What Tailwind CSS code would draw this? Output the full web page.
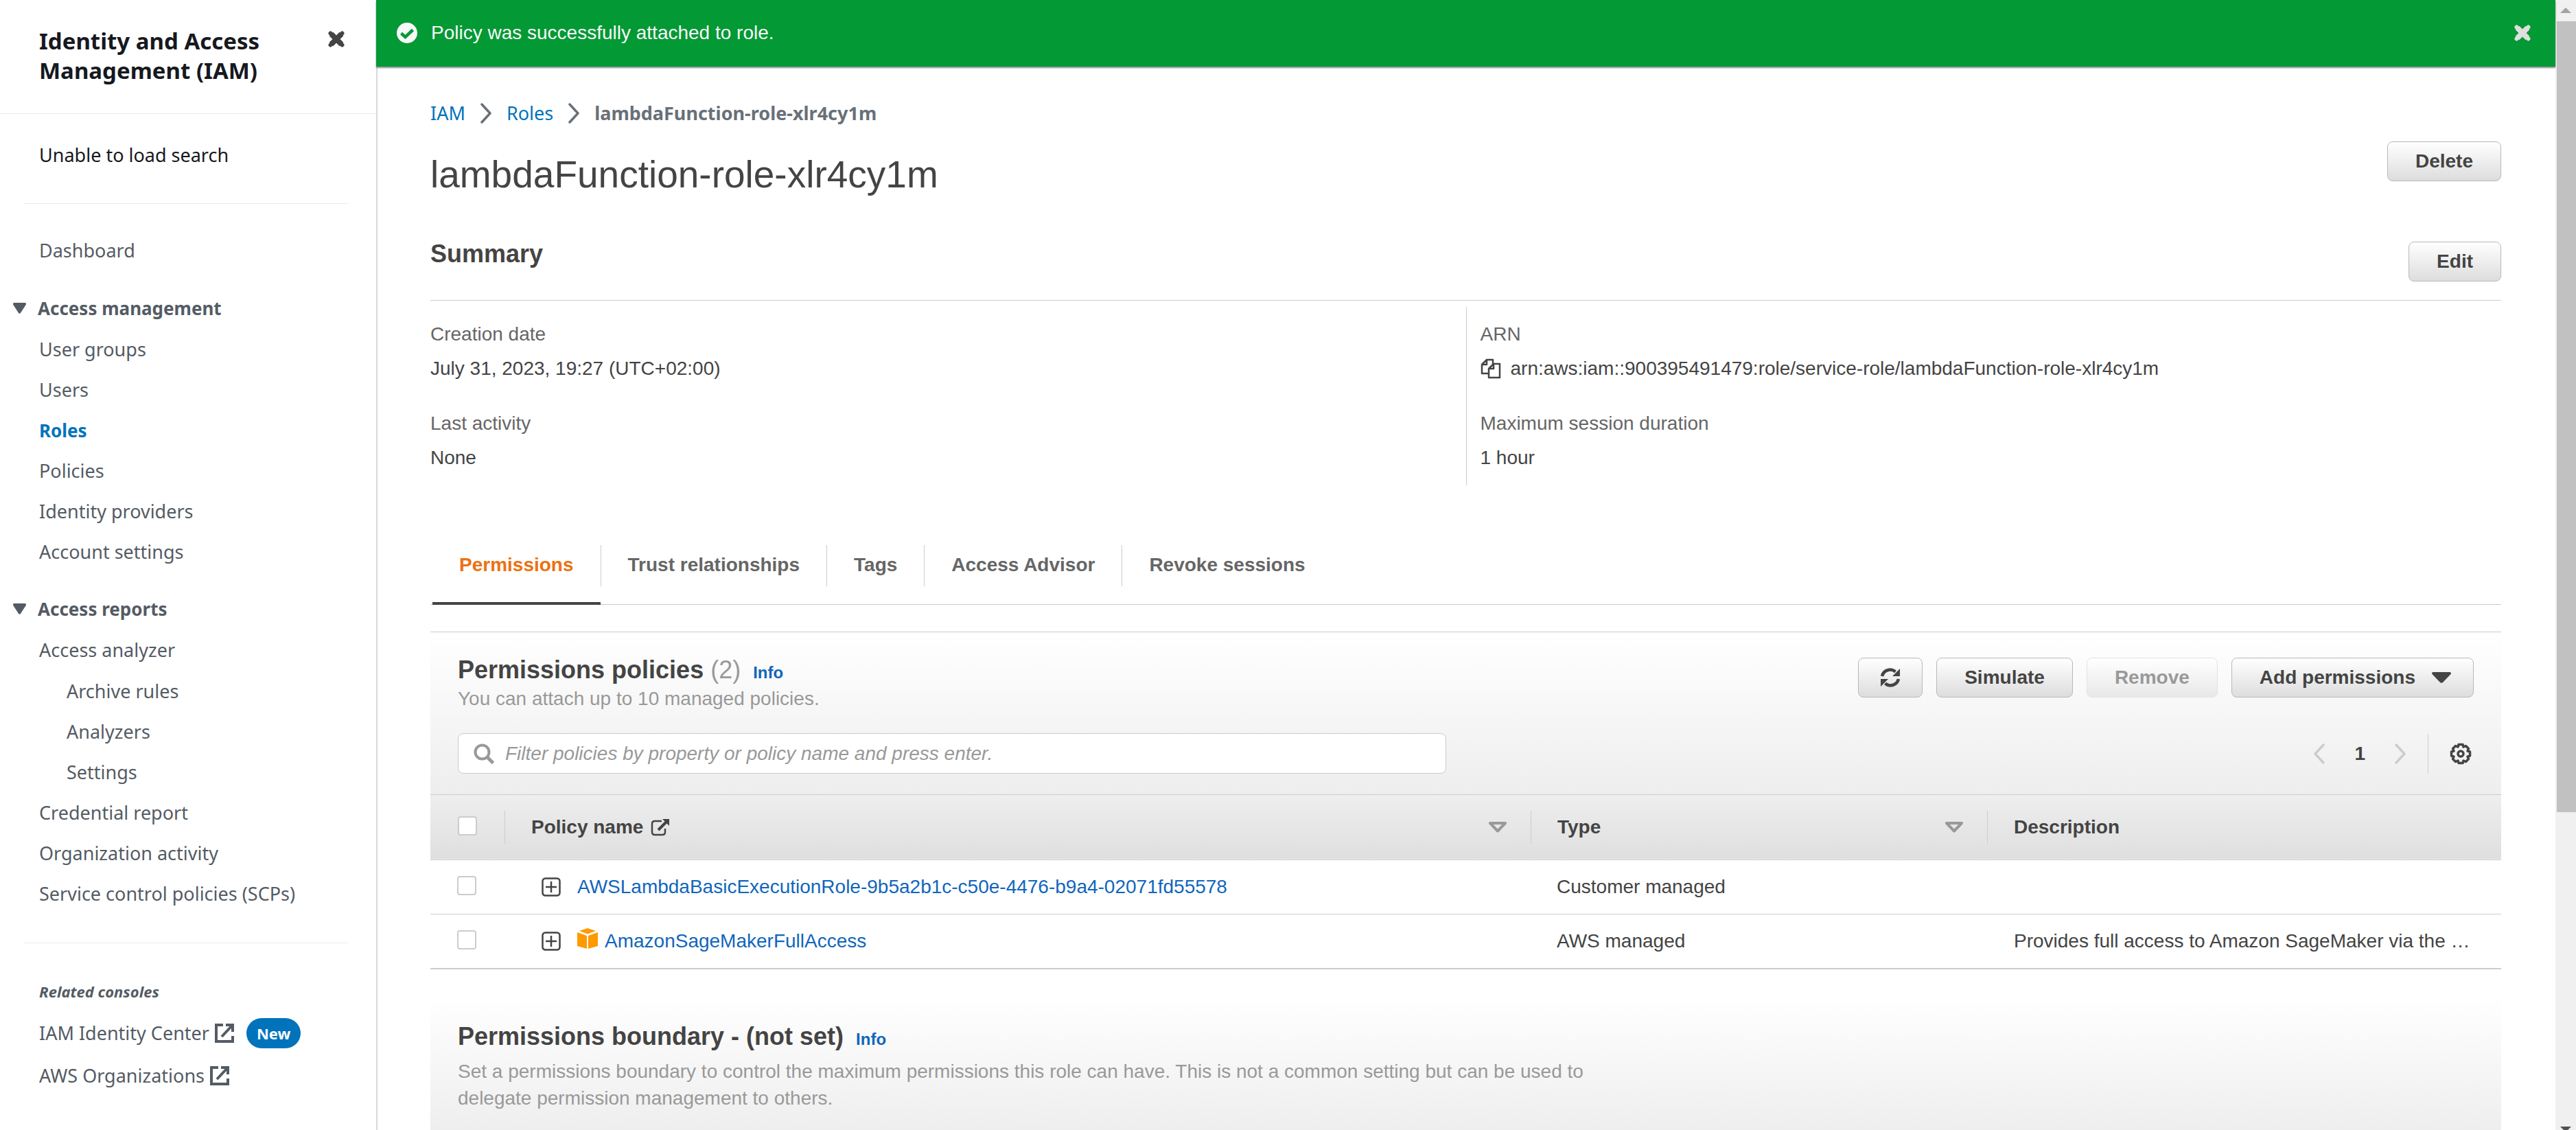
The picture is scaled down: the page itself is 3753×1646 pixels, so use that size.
<!DOCTYPE html>
<html lang="en">
<head>
<meta charset="utf-8">
<title>IAM - lambdaFunction-role-xlr4cy1m</title>
<script src="https://cdn.jsdelivr.net/npm/@tailwindcss/browser@4"></script>
</head>
<body class="flex h-screen overflow-hidden bg-white font-['Liberation_Sans',Arial,sans-serif] text-[28px] leading-[32px] text-[#444]">

<svg class="hidden" aria-hidden="true">
  <symbol id="close" viewBox="0 0 24 24"><path d="M4.500 4.500 19.500 19.500M19.500 4.500 4.500 19.500" fill="none" stroke="currentColor" stroke-width="8" stroke-linecap="butt"/><path d="M3.500 3.500 20.500 20.500M20.500 3.500 3.500 20.500" fill="none" stroke="currentColor" stroke-width="6" stroke-linecap="round"/></symbol>
  <symbol id="caret" viewBox="0 0 28 16"><path d="M2 0H26Q29 .5 27.500 3L16.500 14.500Q14 17 11.500 14.500L.5 3Q-1 .5 2 0Z" fill="currentColor"/></symbol>
  <symbol id="chevron" viewBox="0 0 18 30"><path d="M3 2 15 15 3 28" fill="none" stroke="currentColor" stroke-width="3.500" stroke-linecap="round" stroke-linejoin="round"/></symbol>
  <symbol id="external" viewBox="0 0 28 28"><path d="M12 2H2V26H26V18M16 2H26V12M25 3 10 19" fill="none" stroke="currentColor" stroke-width="4"/></symbol>
  <symbol id="external-round" viewBox="0 0 28 26"><path d="M16 4H6Q2 4 2 8V20Q2 24 6 24H17Q21 24 21 20V15" fill="none" stroke="currentColor" stroke-width="2.500"/><path d="M11 17 23 5" stroke="currentColor" stroke-width="4"/><path d="M17 1H27V11Z" fill="currentColor"/></symbol>
  <symbol id="sort" viewBox="0 0 28 16"><path d="M3 2H25L14 13.500Z" fill="none" stroke="currentColor" stroke-width="4" stroke-linejoin="round"/></symbol>
  <symbol id="expand" viewBox="0 0 28 28"><rect x="1.500" y="1.500" width="25" height="25" rx="4" fill="none" stroke="currentColor" stroke-width="2.500"/><path d="M14 6V22M6 14H22" stroke="currentColor" stroke-width="2.500"/></symbol>
</svg>

<aside class="w-[548px] flex-none overflow-hidden font-['Noto_Sans',sans-serif] text-[27px] text-[#545b64]">
  <header class="flex h-[166px] items-start justify-between border-b border-[#eaeded] pt-[38px] pr-[46px] pl-[57px]">
    <h2 class="w-[360px] text-[33px] leading-[43px] font-bold text-[#16191f]">Identity and Access Management (IAM)</h2>
    <button type="button" aria-label="Close navigation" class="mt-[7px] text-[#444]"><svg class="size-6"><use href="#close"/></svg></button>
  </header>
  <p class="flex h-[120px] items-center pl-[57px] leading-[36px] text-[#16191f]">Unable to load search</p>
  <hr class="mt-[10px] mr-10 ml-[34px] border-[#eaeded]">
  <nav aria-label="IAM">
    <a href="#" class="mt-[38px] flex h-[60px] items-center pl-[57px]">Dashboard</a>

    <button type="button" class="mt-6 flex h-[60px] items-center gap-[17px] pl-[19px] text-[26px] font-bold"><svg class="h-4 w-[19px]" viewBox="0 0 28 16" preserveAspectRatio="none"><use href="#caret"/></svg>Access management</button>
    <ul class="pl-[57px]">
      <li><a href="#" class="flex h-[59px] items-center">User groups</a></li>
      <li><a href="#" class="flex h-[59px] items-center">Users</a></li>
      <li><a href="#" aria-current="page" class="flex h-[59px] items-center text-[26px] font-bold text-[#0073bb]">Roles</a></li>
      <li><a href="#" class="flex h-[59px] items-center">Policies</a></li>
      <li><a href="#" class="flex h-[59px] items-center">Identity providers</a></li>
      <li><a href="#" class="flex h-[59px] items-center">Account settings</a></li>
    </ul>

    <button type="button" class="mt-6 flex h-[60px] items-center gap-[17px] pl-[19px] text-[26px] font-bold"><svg class="h-4 w-[19px]" viewBox="0 0 28 16" preserveAspectRatio="none"><use href="#caret"/></svg>Access reports</button>
    <ul class="pl-[57px]">
      <li><a href="#" class="flex h-[60px] items-center">Access analyzer</a>
        <ul class="pl-10">
          <li><a href="#" class="flex h-[59px] items-center">Archive rules</a></li>
          <li><a href="#" class="flex h-[59px] items-center">Analyzers</a></li>
          <li><a href="#" class="flex h-[59px] items-center">Settings</a></li>
        </ul>
      </li>
      <li><a href="#" class="flex h-[59px] items-center">Credential report</a></li>
      <li><a href="#" class="flex h-[59px] items-center">Organization activity</a></li>
      <li><a href="#" class="flex h-[59px] items-center">Service control policies (SCPs)</a></li>
    </ul>
  </nav>
  <hr class="mt-[42px] mr-10 ml-[34px] border-[#eaeded]">
  <section class="pt-10 pl-[57px]">
    <h3 class="flex h-[60px] items-center text-[22px] font-bold italic">Related consoles</h3>
    <ul>
      <li class="flex h-[62px] items-center gap-[18px]"><a href="#" class="flex items-center gap-2">IAM Identity Center <svg class="size-7"><use href="#external"/></svg></a><span class="flex h-11 items-center rounded-full bg-[#0073bb] px-[15px] text-[22px] font-bold text-white">New</span></li>
      <li class="flex h-[62px] items-center"><a href="#" class="flex items-center gap-2">AWS Organizations <svg class="size-7"><use href="#external"/></svg></a></li>
    </ul>
  </section>
</aside>

<main class="min-w-0 flex-1">
  <div role="status" class="relative flex h-[97px] items-center bg-[#039934] pr-[36px] pb-[2px] pl-[30px] text-[#f8f8f8] shadow-[0_2px_2px_rgba(84,91,100,0.7)]">
    <svg class="size-[30px]" viewBox="0 0 30 30"><circle cx="15" cy="15" r="15" fill="#f8f8f8"/><path d="M6.500 15.500 12.500 21 23.500 10.500" fill="none" stroke="#039934" stroke-width="4.500"/></svg>
    <p class="ml-5 flex-1">Policy was successfully attached to role.</p>
    <button type="button" aria-label="Dismiss" class="text-[#dfdfdf]"><svg class="size-6"><use href="#close"/></svg></button>
  </div>

  <div class="border-l-2 border-[#d5dbdb] pt-[50px] pr-[79px] pl-[77px]">
    <nav aria-label="Breadcrumb" class="font-['Noto_Sans',sans-serif] text-[27px] leading-[36px] text-[#687078]">
      <ol class="flex items-center gap-[21px]">
        <li class="flex items-center gap-[21px]"><a href="#" class="text-[#0073bb]">IAM</a><svg class="h-[30px] w-[18px]"><use href="#chevron"/></svg></li>
        <li class="flex items-center gap-[21px]"><a href="#" class="text-[#0073bb]">Roles</a><svg class="h-[30px] w-[18px]"><use href="#chevron"/></svg></li>
        <li class="font-bold" aria-current="page">lambdaFunction-role-xlr4cy1m</li>
      </ol>
    </nav>

    <div class="mt-[23px] flex items-start justify-between">
      <h1 class="mt-4 text-[55px] leading-[64px]">lambdaFunction-role-xlr4cy1m</h1>
      <button type="button" class="h-[58px] rounded-lg border border-[#b8b8b8] bg-linear-to-b from-white to-[#ddd] px-10 font-bold">Delete</button>
    </div>

    <section>
      <div class="mt-[66px] flex items-start justify-between border-b border-[#ccc] pb-[27px]">
        <h2 class="text-[36px] leading-[36px] font-bold">Summary</h2>
        <button type="button" class="h-[58px] rounded-lg border border-[#b8b8b8] bg-linear-to-b from-white to-[#ddd] px-10 font-bold">Edit</button>
      </div>
      <div class="mt-[9px] grid grid-cols-2">
        <dl class="py-6">
          <dt class="text-[#666]">Creation date</dt>
          <dd class="mt-[18px]">July 31, 2023, 19:27 (UTC+02:00)</dd>
          <dt class="mt-12 text-[#666]">Last activity</dt>
          <dd class="mt-[18px]">None</dd>
        </dl>
        <dl class="border-l border-[#ccc] py-6 pl-5">
          <dt class="text-[#666]">ARN</dt>
          <dd class="mt-[18px] flex items-center gap-[14px]">
            <button type="button" aria-label="Copy ARN"><svg class="h-[30px] w-[30px]" viewBox="0 0 30 30" fill="none" stroke="#444" stroke-width="2.500" stroke-linejoin="round"><path d="M11 22H2V9L9 2H18V8M9 2V9H2"/><path d="M12 15 19 8H28V28H12ZM19 8V15H12"/></svg></button>
            arn:aws:iam::900395491479:role/service-role/lambdaFunction-role-xlr4cy1m
          </dd>
          <dt class="mt-12 text-[#666]">Maximum session duration</dt>
          <dd class="mt-[18px]">1 hour</dd>
        </dl>
      </div>
    </section>

    <div role="tablist" class="mt-[87px] flex items-start border-b border-[#ccc] pl-[3px] font-bold text-[#666]">
      <button type="button" role="tab" aria-selected="true" class="-mb-px flex h-[87px] items-start border-b-4 border-[#444] px-[39px] pt-[13px] text-[#ec7211]">Permissions</button>
      <span class="h-[60px] w-px bg-[#ccc]"></span>
      <button type="button" role="tab" aria-selected="false" class="flex items-start px-[39px] pt-[13px]">Trust relationships</button>
      <span class="h-[60px] w-px bg-[#ccc]"></span>
      <button type="button" role="tab" aria-selected="false" class="flex items-start px-[39px] pt-[13px]">Tags</button>
      <span class="h-[60px] w-px bg-[#ccc]"></span>
      <button type="button" role="tab" aria-selected="false" class="flex items-start px-[39px] pt-[13px]">Access Advisor</button>
      <span class="h-[60px] w-px bg-[#ccc]"></span>
      <button type="button" role="tab" aria-selected="false" class="flex items-start px-[39px] pt-[13px]">Revoke sessions</button>
    </div>

    <section class="mt-[39px] border-b-2 border-[#ccc]">
      <div class="border-y border-[#ccc] bg-linear-to-b from-white to-[#eee] px-10 pt-[37px] pb-[30px]">
        <div class="flex items-start justify-between">
          <div>
            <h2 class="flex items-baseline text-[36px] leading-[36px] font-bold">Permissions policies<span class="ml-[10px] font-normal text-[#999]">(2)</span><a href="#" class="ml-[18px] text-[24px] leading-[24px] text-[#1166bb]">Info</a></h2>
            <p class="mt-2 text-[#999]">You can attach up to 10 managed policies.</p>
          </div>
          <div class="flex gap-5 font-bold">
            <button type="button" aria-label="Refresh" class="flex h-[58px] w-[94px] items-center justify-center rounded-lg border border-[#b8b8b8] bg-linear-to-b from-white to-[#ddd]"><svg class="h-7 w-[30px]" viewBox="0 0 30 28"><path d="M3 12A12 12 0 0 1 22.500 5.500M27 16A12 12 0 0 1 7.500 22.500" fill="none" stroke="#444" stroke-width="4.500"/><path d="M29 1V12H18ZM1 27V16H12Z" fill="#444"/></svg></button>
            <button type="button" class="h-[58px] rounded-lg border border-[#b8b8b8] bg-linear-to-b from-white to-[#ddd] px-10">Simulate</button>
            <button type="button" disabled class="h-[58px] rounded-lg border border-[#e2e2e2] bg-linear-to-b from-white to-[#e8e8e8] px-10 text-[#999]">Remove</button>
            <button type="button" class="flex h-[58px] items-center gap-6 rounded-lg border border-[#b8b8b8] bg-linear-to-b from-white to-[#ddd] pr-8 pl-10">Add permissions <svg class="h-4 w-7"><use href="#caret"/></svg></button>
          </div>
        </div>
        <div class="mt-[34px] flex items-center justify-between">
          <label class="flex h-[59px] w-[1440px] items-center gap-4 rounded-lg border border-[#ccc] bg-white pl-[22px]">
            <svg class="size-[30px]" viewBox="0 0 30 30" fill="none" stroke="#999" stroke-width="4"><circle cx="12.500" cy="12.500" r="10"/><path d="M20 20 28.500 28.500" stroke-width="5"/></svg>
            <input type="text" aria-label="Filter policies" placeholder="Filter policies by property or policy name and press enter." class="h-full flex-1 bg-transparent placeholder:text-[#999] placeholder:italic">
          </label>
          <div class="flex items-center pr-[3px]">
            <button type="button" aria-label="Previous page" class="text-[#ccc]"><svg class="h-[30px] w-[18px] rotate-180"><use href="#chevron"/></svg></button>
            <span class="mx-[42px] font-bold">1</span>
            <button type="button" aria-label="Next page" class="text-[#ccc]"><svg class="h-[30px] w-[18px]"><use href="#chevron"/></svg></button>
            <span class="mx-[31px] h-[58px] w-px bg-[#ccc]"></span>
            <button type="button" aria-label="Preferences"><svg class="size-8" viewBox="0 0 32 32" fill="none" stroke="#444" stroke-width="3.500" stroke-linejoin="round"><path d="M13 2.500H19L20 6 23.500 4.500 27.500 8.500 26 12 29.500 13V19L26 20 27.500 23.500 23.500 27.500 20 26 19 29.500H13L12 26 8.500 27.500 4.500 23.500 6 20 2.500 19V13L6 12 4.500 8.500 8.500 4.500 12 6Z"/><circle cx="16" cy="16" r="4"/></svg></button>
          </div>
        </div>
      </div>
      <table class="w-full table-fixed text-left">
        <colgroup><col class="w-[108px]"><col><col class="w-[665px]"><col class="w-[749px]"></colgroup>
        <thead>
          <tr class="h-[94px] border-b border-[#ccc] bg-linear-to-b from-[#eee] to-[#dfdfdf]">
            <th class="pb-1 pl-10"><input type="checkbox" aria-label="Select all policies" class="block size-7 appearance-none rounded-sm border-2 border-[#ccc] bg-white"></th>
            <th><div class="flex h-12 items-center border-l border-[#ccc] pr-[34px] pl-[38px]">Policy name<svg class="ml-[11px] h-[26px] w-7"><use href="#external-round"/></svg><svg class="ml-auto h-4 w-7 text-[#999]"><use href="#sort"/></svg></div></th>
            <th><div class="flex h-12 items-center justify-between border-l border-[#ccc] pr-[34px] pl-[38px]">Type<svg class="h-4 w-7 text-[#999]"><use href="#sort"/></svg></div></th>
            <th><div class="flex h-12 items-center border-l border-[#ccc] pl-[38px]">Description</div></th>
          </tr>
        </thead>
        <tbody>
          <tr class="h-[79px] border-b border-[#ccc]">
            <td class="pb-1 pl-[39px]"><input type="checkbox" aria-label="Select AWSLambdaBasicExecutionRole" class="block size-7 appearance-none rounded-sm border-2 border-[#ccc] bg-white"></td>
            <td><div class="flex items-center pl-[54px]"><button type="button" aria-label="Expand" class="mr-6"><svg class="size-7"><use href="#expand"/></svg></button><a href="#" class="text-[#1166bb]">AWSLambdaBasicExecutionRole-9b5a2b1c-c50e-4476-b9a4-02071fd55578</a></div></td>
            <td class="pl-[38px]">Customer managed</td>
            <td></td>
          </tr>
          <tr class="h-[79px]">
            <td class="pb-1 pl-[39px]"><input type="checkbox" aria-label="Select AmazonSageMakerFullAccess" class="block size-7 appearance-none rounded-sm border-2 border-[#ccc] bg-white"></td>
            <td><div class="flex items-center pl-[54px]"><button type="button" aria-label="Expand" class="mr-6"><svg class="size-7"><use href="#expand"/></svg></button><svg class="mr-[10px] mb-2 h-[30px] w-[30px]" viewBox="0 0 30 30" fill="#ff9900"><path d="M15 0 27 4 15 8.500 3 4ZM0 6 14 11V30L0 26ZM30 6 16 11V30L30 26Z"/></svg><a href="#" class="text-[#1166bb]">AmazonSageMakerFullAccess</a></div></td>
            <td class="pl-[38px]">AWS managed</td>
            <td class="truncate pl-[39px]">Provides full access to Amazon SageMaker via the …</td>
          </tr>
        </tbody>
      </table>
    </section>

    <section class="mt-10 bg-linear-to-b from-white to-[#eee] px-10 pt-10 pb-[30px]">
      <h2 class="flex items-baseline text-[36px] leading-[36px] font-bold">Permissions boundary - (not set)<a href="#" class="ml-[18px] text-[24px] leading-[24px] text-[#1166bb]">Info</a></h2>
      <p class="mt-[13px] max-w-[1700px] leading-[39px] text-[#999]">Set a permissions boundary to control the maximum permissions this role can have. This is not a common setting but can be used to delegate permission management to others.</p>
    </section>
  </div>
</main>

<div aria-hidden="true" class="flex w-[30px] flex-none flex-col bg-[#f0f0f0]">
  <div class="flex h-[31px] flex-none justify-center pt-[11px]"><svg class="h-2 w-4" viewBox="0 0 16 8"><path d="M8 0 16 8H0Z" fill="#a3a3a3"/></svg></div>
  <div class="ml-[2px] h-[70%] bg-[#c1c1c1]"></div>
  <svg class="mx-auto mt-auto h-[5px] w-4" viewBox="0 0 16 5"><path d="M0 0H16L11 5H5Z" fill="#505050"/></svg>
</div>
</body>
</html>
